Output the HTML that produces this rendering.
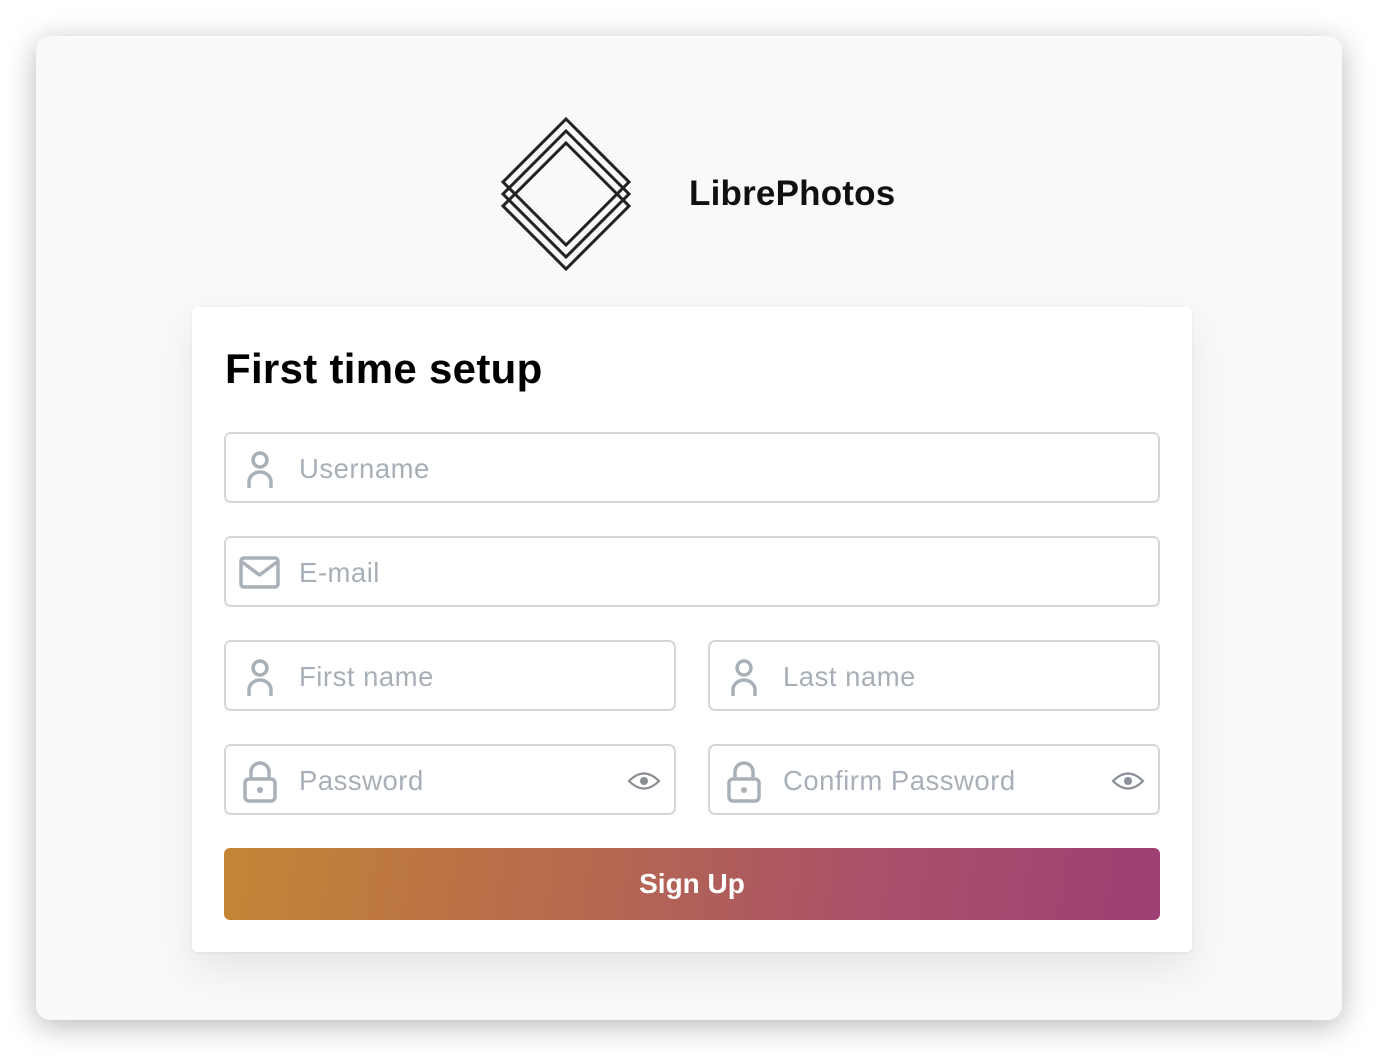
<!DOCTYPE html>
<html><head><meta charset="utf-8"><style>
*{box-sizing:border-box;margin:0;padding:0}
body{width:1378px;height:1056px;background:#fff;font-family:"Liberation Sans",sans-serif;position:relative;overflow:hidden}
.win{position:absolute;left:36px;top:36px;width:1306px;height:984px;background:#f8f9fb;border-radius:14px;box-shadow:0 6px 30px rgba(0,0,0,.28)}
.card{position:absolute;left:192px;top:307px;width:1000px;height:645px;background:#fff;border-radius:5px;box-shadow:0 18px 40px rgba(0,0,0,.08),0 1px 3px rgba(0,0,0,.06)}
h1{position:absolute;left:225px;top:345px;font-size:42px;font-weight:bold;color:#000;letter-spacing:.3px}
.title{position:absolute;left:689px;top:174px;font-size:35px;font-weight:bold;color:#111;letter-spacing:.2px}
.inp{position:absolute;height:71px;border:2px solid #d4d6d9;border-radius:7px;background:#fff}
.inp span{position:absolute;left:73px;top:19px;font-size:27.5px;color:#a9afb7;letter-spacing:.5px}
.inp svg{position:absolute}
.btn{position:absolute;left:224px;top:848px;width:936px;height:72px;border-radius:6px;background:linear-gradient(100deg,#c58535 0%,#b5684f 40%,#a9506b 70%,#9d3f73 100%);color:#fff;font-size:28px;font-weight:bold;text-align:center;line-height:72px}
</style></head><body>
<div class="win"></div>
<svg style="position:absolute;left:0;top:0" width="1378" height="300">
<g fill="none" stroke="#222" stroke-width="3">
<path d="M566 119 L629 182 L566 245 L503 182 Z"/>
<path d="M566 131 L629 194 L566 257 L503 194 Z"/>
<path d="M566 143 L629 206 L566 269 L503 206 Z"/>
</g></svg>
<div class="title">LibrePhotos</div>
<div class="card"></div>
<h1>First time setup</h1>

<div class="inp" style="left:224px;top:432px;width:936px">
<svg style="left:14px;top:14px" width="40" height="40" viewBox="0 0 40 40" fill="none" stroke="#aab0b8" stroke-width="3.5" stroke-linecap="round"><circle cx="20" cy="12" r="7"/><path d="M9 39 V34 a11 10 0 0 1 22 0 V39"/></svg>
<span>Username</span></div>

<div class="inp" style="left:224px;top:536px;width:936px">
<svg style="left:12px;top:16px" width="44" height="40" viewBox="0 0 44 40" fill="none" stroke="#aab0b8" stroke-width="3.5" stroke-linejoin="round"><rect x="3" y="4" width="37" height="29" rx="3"/><path d="M4 8 L21.5 21 L39 8"/></svg>
<span>E-mail</span></div>

<div class="inp" style="left:224px;top:640px;width:452px">
<svg style="left:14px;top:14px" width="40" height="40" viewBox="0 0 40 40" fill="none" stroke="#aab0b8" stroke-width="3.5" stroke-linecap="round"><circle cx="20" cy="12" r="7"/><path d="M9 39 V34 a11 10 0 0 1 22 0 V39"/></svg>
<span>First name</span></div>

<div class="inp" style="left:708px;top:640px;width:452px">
<svg style="left:14px;top:14px" width="40" height="40" viewBox="0 0 40 40" fill="none" stroke="#aab0b8" stroke-width="3.5" stroke-linecap="round"><circle cx="20" cy="12" r="7"/><path d="M9 39 V34 a11 10 0 0 1 22 0 V39"/></svg>
<span>Last name</span></div>

<div class="inp" style="left:224px;top:744px;width:452px">
<svg style="left:14px;top:14px" width="40" height="44" viewBox="0 0 40 44"><path d="M11 20 V12 a9 9 0 0 1 18 0 V20" fill="none" stroke="#aab0b8" stroke-width="3.5"/><rect x="5" y="19" width="30" height="22" rx="4" fill="none" stroke="#aab0b8" stroke-width="3.5"/><circle cx="20" cy="30" r="3" fill="#aab0b8"/></svg>
<span>Password</span>
<svg style="left:401px;top:24px" width="34" height="22" viewBox="0 0 34 22"><path d="M2 11 Q17 -4 32 11 Q17 26 2 11 Z" fill="none" stroke="#8a8f96" stroke-width="2.2"/><circle cx="17" cy="11" r="4" fill="#8a8f96"/></svg>
</div>

<div class="inp" style="left:708px;top:744px;width:452px">
<svg style="left:14px;top:14px" width="40" height="44" viewBox="0 0 40 44"><path d="M11 20 V12 a9 9 0 0 1 18 0 V20" fill="none" stroke="#aab0b8" stroke-width="3.5"/><rect x="5" y="19" width="30" height="22" rx="4" fill="none" stroke="#aab0b8" stroke-width="3.5"/><circle cx="20" cy="30" r="3" fill="#aab0b8"/></svg>
<span>Confirm Password</span>
<svg style="left:401px;top:24px" width="34" height="22" viewBox="0 0 34 22"><path d="M2 11 Q17 -4 32 11 Q17 26 2 11 Z" fill="none" stroke="#8a8f96" stroke-width="2.2"/><circle cx="17" cy="11" r="4" fill="#8a8f96"/></svg>
</div>

<div class="btn">Sign Up</div>
</body></html>
